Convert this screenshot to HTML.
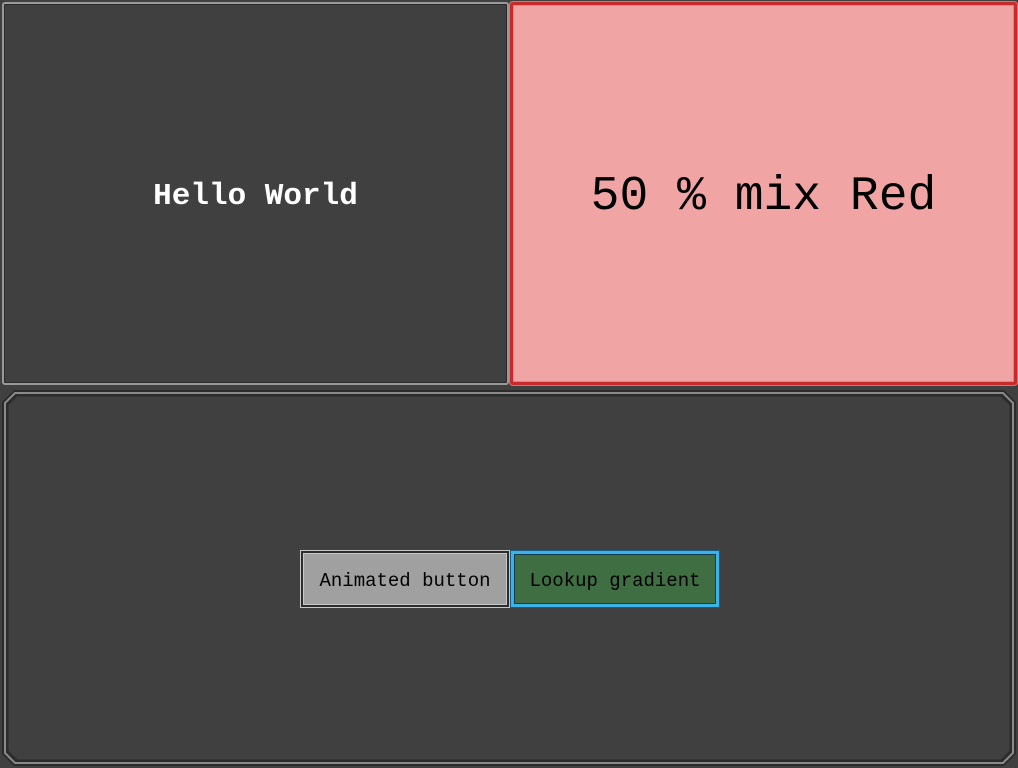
<!DOCTYPE html>
<html><head><style>
html,body{margin:0;padding:0;background:#404040;width:1018px;height:768px;overflow:hidden;position:relative;font-family:"Liberation Mono",monospace}
.p{position:absolute;box-sizing:border-box;display:flex;align-items:center;justify-content:center}
#a{left:2px;top:2px;width:507px;height:383px;background:#404040;border:2px solid #9a9a9a;box-shadow:inset 0 0 0 1px #2a2a2a;border-radius:3px;color:#fff;font-weight:bold;font-size:31px;padding-top:6px}
#b{left:510px;top:2px;width:507px;height:383px;background:#f0a4a4;border:3px solid #c62a2a;box-shadow:inset 0 0 0 1px #e88080, 0 0 0 1px #e07070;border-radius:3px;color:#000;font-size:48px;padding-top:6px}
.btn{position:absolute;top:551px;height:56px;box-sizing:border-box;display:flex;align-items:center;justify-content:center;font-size:19px;color:#000;padding-top:3px}
#c{left:301px;width:208px;background:#a0a0a0;border:2px solid #2c2c2c;box-shadow:0 0 0 1px #c8c8c8, inset 0 0 0 1px #c8c8c8}
#d{left:511px;width:208px;background:#3f6e42;border:3px solid #3ab4e8;box-shadow:inset 0 0 0 1px #1a3a50, 0 0 0 1px #1a5a80}
</style></head><body>
<svg width="1018" height="768" style="position:absolute;left:0;top:0">
<polygon points="14,390 1004,390 1016,402 1016,754 1004,766 14,766 2,754 2,402" fill="#2c2c2c"/>
<polygon points="15,393 1003,393 1013,403 1013,753 1003,763 15,763 5,753 5,403" fill="none" stroke="#8a8a8a" stroke-width="2"/>
<polygon points="17,396 1001,396 1010,405 1010,751 1001,760 17,760 8,751 8,405" fill="#404040" stroke="#2c2c2c" stroke-width="1"/>
</svg>
<div class="p" id="a">Hello World</div>
<div class="p" id="b">50 % mix Red</div>
<div class="btn" id="c">Animated button</div>
<div class="btn" id="d">Lookup gradient</div>
</body></html>
